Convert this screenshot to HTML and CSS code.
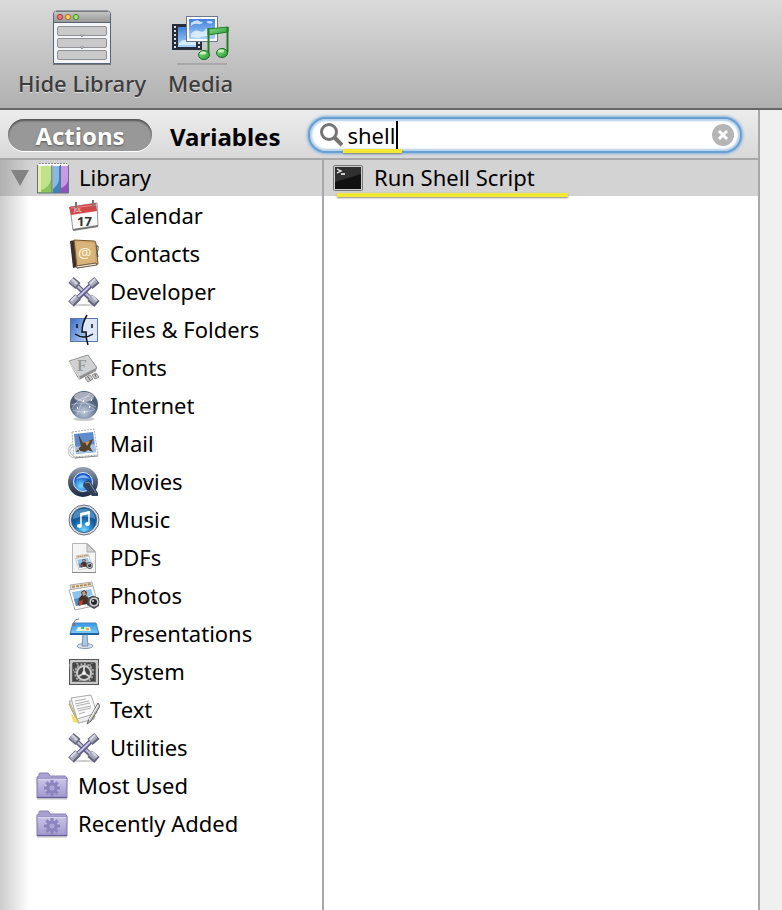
FILE: index.html
```html
<!DOCTYPE html>
<html lang="en">
<head>
  <meta charset="UTF-8">
  <meta name="viewport" content="width=device-width, initial-scale=1.0">
  <title>Library</title>
  <link rel="stylesheet" href="styles.css">
</head>
<body>
<!-- Shared icons -->
<svg class="defs" aria-hidden="true">
  <defs>
    <linearGradient id="blueSky" x1="0" y1="0" x2="0" y2="1"><stop offset="0" stop-color="#3f80dc"/><stop offset="1" stop-color="#a9d2fa"/></linearGradient>
    <linearGradient id="folderFill" x1="0" y1="0" x2="0" y2="1"><stop offset="0" stop-color="#c9c3e6"/><stop offset="1" stop-color="#a39bcf"/></linearGradient>
  </defs>
  <symbol id="wrenches" viewBox="0 0 32 32">
    <ellipse cx="16" cy="29" rx="10" ry="1" fill="#ccc"/>
    <g stroke-linecap="butt" fill="none">
      <path d="M5 6l22 21" stroke="#6a6887" stroke-width="5"/>
      <path d="M5 6l22 20" stroke="#c3c1de" stroke-width="2"/>
      <path d="M3 4l7 6M22 22l7 6" stroke="#66667c" stroke-width="8"/>
      <path d="M3 4l6 5M22 21l6 5" stroke="#a6a6ba" stroke-width="5"/>
      <path d="M4 3l5 5M24 20l5 5" stroke="#d6d6e2" stroke-width="2"/>
      <path d="M27 5L5 27" stroke="#615e84" stroke-width="5"/>
      <path d="M27 5L5 26" stroke="#c6c3e6" stroke-width="2"/>
      <path d="M29 4l-7 6M10 21l-7 7" stroke="#66667c" stroke-width="8"/>
      <path d="M28 4l-6 5M9 21l-6 6" stroke="#a9a9bd" stroke-width="5"/>
      <path d="M27 3l-5 5M8 20l-5 5" stroke="#dadae6" stroke-width="2"/>
    </g>
  </symbol>
  <symbol id="smartFolder" viewBox="0 0 32 32">
    <path d="M1 28V7l2-1V4q0-1 1-1h8q1 0 2 3h15q1 0 1 1l1 1v20z" fill="#a8a1d0" stroke="#8982b8"/>
    <path d="M1 9h30l-1 18H2z" fill="url(#folderFill)" stroke="#9189c2"/>
    <path d="M2 9.500h28" stroke="#d9d5ef"/>
    <path d="M1 27.500h30" stroke="#665e98"/>
    <path d="M1 29h30" stroke="#bbb"/>
    <g fill="none" stroke="#8b83bd">
      <circle cx="16" cy="18" r="4" stroke-width="3"/>
      <path d="M16 10v4M16 22v4M8 18h4M20 18h4M10.400 12.400l3 3M18.600 20.600l3 3M21.600 12.400l-3 3M13.400 20.600l-3 3" stroke-width="3"/>
      <circle cx="16" cy="18" r="1.500" stroke="#a8a1d3"/>
    </g>
  </symbol>
  <symbol id="snapshot" viewBox="0 0 32 32">
    <path d="M2 5l22-3 2 16-20 5z" fill="#efe4cf" stroke="#aaa"/>
    <path d="M4 7l19-3" stroke="#b08d64" stroke-width="2" stroke-dasharray="3 1"/>
    <path d="M1 10l24-4 5 19-23 5z" fill="#fff" stroke="#aaa"/>
    <path d="M4 12l19-3 4 13-19 4z" fill="#8cc4ef"/>
    <path d="M6 19l19-4 2 7-19 4z" fill="#4a91ca"/>
    <path d="M10 25l1-7 3-3-1-3 3-2 3 2-1 4 3 3v5z" fill="#4a2f26"/>
    <path d="M14 12l3-1 1 4-3 1z" fill="#d39a72"/>
    <path d="M11 21l4-1-1 5-3 1z" fill="#b5432f"/>
    <path d="M20 18l6-3 5 3v8l-5 3-7-4z" fill="#4a4d52"/>
    <path d="M20 17l5-2 5 2" stroke="#eee" fill="none"/>
    <circle cx="26" cy="22" r="5" fill="#d3d5d8" stroke="#55585b"/>
    <circle cx="26" cy="22" r="3" fill="#25282d"/>
    <circle cx="25" cy="21" r="1" fill="#ddd"/>
  </symbol>
</svg>

<header class="toolbar">
  <button class="tool" type="button">
    <svg width="60" height="56" viewBox="0 0 60 56" aria-hidden="true">
      <defs><linearGradient id="winBar" x1="0" y1="0" x2="0" y2="1"><stop offset="0" stop-color="#c8c8c8"/><stop offset="1" stop-color="#999"/></linearGradient></defs>
      <path d="M1 54.500h58" stroke="#777"/>
      <path d="M1.500 53.500V4q0-3 3-3h51q3 0 3 3v49.500z" fill="#f3f4f5" stroke="#56647a"/>
      <path d="M2 12V4q0-3 3-3h50q3 0 3 3v8z" fill="url(#winBar)"/>
      <path d="M2 12.500h56" stroke="#58616f"/>
      <path d="M4 1.500h52" stroke="#777"/>
      <g stroke-width="1">
        <circle cx="8" cy="7" r="2.700" fill="#e9767b" stroke="#9a4548"/>
        <circle cx="16" cy="7" r="2.700" fill="#ffcb53" stroke="#a1752c"/>
        <circle cx="24" cy="7" r="2.700" fill="#9ee46a" stroke="#4f8838"/>
      </g>
      <g fill="#c9c9c9" stroke="#8e9195">
        <rect x="5.500" y="16.500" width="49" height="9" rx="1.500"/>
        <rect x="5.500" y="28.500" width="49" height="9" rx="1.500"/>
        <rect x="5.500" y="40.500" width="49" height="9" rx="1.500"/>
      </g>
      <path d="M28 25l2 2 2-2zM28 37l2 2 2-2z" fill="#c9c9c9" stroke="#8e9195"/>
    </svg>
    <span>Hide Library</span>
  </button>
  <button class="tool" type="button">
    <svg width="60" height="56" viewBox="0 0 60 56" aria-hidden="true">
      <defs><linearGradient id="note" x1="0" y1="0" x2="1" y2="1"><stop offset="0" stop-color="#8fe08f"/><stop offset="1" stop-color="#219a2c"/></linearGradient></defs>
      <path d="M6 54h50" stroke="#a8a8a8" stroke-width="2"/>
      <rect x="1" y="14" width="30" height="26" fill="#272e3b"/>
      <path d="M4 16v22M28 16v22" stroke="#d5dbe2" stroke-width="2" stroke-dasharray="2 2"/>
      <rect x="7" y="17" width="18" height="20" fill="url(#blueSky)"/>
      <path d="M8 33q4-5 9-2t8-3v7H8z" fill="#d7ebff"/>
      <rect x="15.500" y="6.500" width="31" height="25" fill="#fff" stroke="#69788f"/>
      <rect x="18" y="9" width="26" height="20" fill="url(#blueSky)"/>
      <path d="M20 13q5-4 8-2t4 0q-1 4-5 3t-7 2zM20 24q3-5 8-3t6-1 7 1-4 5-8 2-9-1zM35 12q4-2 7 0-2 3-7 0z" fill="#e8f4ff" opacity=".8"/>
      <path d="M37 19l20-2v5l-20 3z" fill="url(#note)" stroke="#247b2c"/>
      <path d="M37.500 18v26M56.500 17v25" stroke="#247b2c" stroke-width="2"/>
      <ellipse cx="33" cy="45" rx="5.500" ry="4.500" fill="url(#note)" stroke="#1b6b25"/>
      <ellipse cx="51" cy="43" rx="5.500" ry="4.500" fill="url(#note)" stroke="#1b6b25"/>
      <ellipse cx="32" cy="43" rx="3" ry="1.500" fill="#c8f7bd"/>
      <ellipse cx="50" cy="41" rx="3" ry="1.500" fill="#c8f7bd"/>
    </svg>
    <span>Media</span>
  </button>
</header>

<div class="main">
  <div class="panel">
    <div class="filter-bar">
      <button class="tab active" type="button">Actions</button>
      <button class="tab" type="button">Variables</button>
      <div class="search">
        <svg width="24" height="24" viewBox="0 0 24 24" aria-hidden="true">
          <circle cx="10" cy="9" r="7.500" fill="none" stroke="#757575" stroke-width="3"/>
          <path d="M15 14l8 8" stroke="#757575" stroke-width="4"/>
        </svg>
        <input type="text" value="shell" aria-label="Search actions">
        <span class="caret"></span>
        <button class="clear" type="button" aria-label="Clear search">
          <svg width="22" height="22" viewBox="0 0 22 22" aria-hidden="true">
            <circle cx="11" cy="11" r="11" fill="#b5b5b5"/>
            <path d="M7 7l8 8M15 7l-8 8" stroke="#fff" stroke-width="3"/>
          </svg>
        </button>
        <span class="marker marker-search"></span>
      </div>
    </div>

    <div class="columns">
      <nav class="sidebar">
        <a class="row root" href="#library">
          <svg class="arrow" width="18" height="16" viewBox="0 0 18 16" aria-hidden="true"><path d="M0 0h18L9 16z" fill="#828282"/></svg>
          <svg class="icon" viewBox="0 0 32 32" aria-hidden="true">
            <path d="M2 1h28v4H2z" fill="#e5e8e5"/>
            <path d="M2 1.500h28" stroke="#888" stroke-dasharray="2 1"/>
            <path d="M0 3h15v28H1z" fill="#8cc45b"/>
            <path d="M4 4h10v13q-2 9-10 11z" fill="#bfe38d"/>
            <path d="M1 4h3v26H1z" fill="#e7eda4"/>
            <path d="M16 3h7v28h-7z" fill="#3d82b9"/>
            <path d="M16 4h6v14q-1 5-6 9z" fill="#86b9e4"/>
            <path d="M24 3h8v28h-8z" fill="#9252bd"/>
            <path d="M24 4h7v14q-1 6-7 8z" fill="#c69ae9"/>
            <path d="M1 3h30" stroke="#fff" stroke-width="2"/>
            <path d="M.5 3v28h31V3M15 3v28M23.500 3v28" fill="none" stroke="#657280"/>
          </svg>
          <span>Library</span>
        </a>
        <ul class="tree">
          <li><a class="row child" href="#calendar">
            <svg class="icon" viewBox="0 0 32 32" aria-hidden="true">
              <path d="M2 7l27-4 1 23-25 4z" fill="#fafafa" stroke="#999"/>
              <path d="M5 30l25-4" stroke="#777" stroke-width="2"/>
              <path d="M1 7l27-4 1 8-26 4z" fill="#d0484a"/>
              <path d="M3 8l25-3" stroke="#ee8585"/>
              <path d="M8 2v7M25 0v7" stroke="#777" stroke-width="2"/>
              <text class="cal-month" x="6" y="12">JUL</text>
              <text class="cal-day" x="9" y="26">17</text>
            </svg>
            <span>Calendar</span></a></li>
          <li><a class="row child" href="#contacts">
            <svg class="icon" viewBox="0 0 32 32" aria-hidden="true">
              <path d="M2 3l5-1 2 27-4 1z" fill="#3c302c"/>
              <path d="M6 2l20 1q2 0 2 3l2 20-21 4z" fill="#d0a86b" stroke="#78572f"/>
              <path d="M8 4l18 1 1 19-17 3z" fill="#d9b47a"/>
              <path d="M8 28l20-3 1 2-20 3z" fill="#f2ead9" stroke="#705d40"/>
              <path d="M28 8h2v4l-1 2 1 5" fill="none" stroke="#444"/>
              <text class="at-sign" x="10" y="20">@</text>
            </svg>
            <span>Contacts</span></a></li>
          <li><a class="row child" href="#developer">
            <svg class="icon" aria-hidden="true"><use href="#wrenches"/></svg>
            <span>Developer</span></a></li>
          <li><a class="row child" href="#files">
            <svg class="icon" viewBox="0 0 32 32" aria-hidden="true">
              <defs><linearGradient id="face" x1="0" y1="0" x2="1" y2="1"><stop offset="0" stop-color="#3e6fc9"/><stop offset="1" stop-color="#b6d2f8"/></linearGradient></defs>
              <rect x="2.500" y="4.500" width="27" height="23" fill="#dce7f8" stroke="#5977a5"/>
              <path d="M3 5h15q-4 6-4 13h4q0 5 1 9H3z" fill="url(#face)"/>
              <path d="M19 1q-5 8-5 17h4q0 7 2 13" fill="none" stroke="#111" stroke-width="1.500"/>
              <path d="M9 10v4M24 10v4M7 20q9 6 18 0" fill="none" stroke="#111" stroke-width="1.500"/>
            </svg>
            <span>Files &amp; Folders</span></a></li>
          <li><a class="row child" href="#fonts">
            <svg class="icon" viewBox="0 0 32 32" aria-hidden="true">
              <path d="M2 9l17-6 10 12-1 4-17 9-8-14z" fill="#8a8c8e"/>
              <path d="M1 9l19-6 9 13-18 9z" fill="#cfd1d3" stroke="#999"/>
              <path d="M1 10l10 15v3" fill="none" stroke="#eee"/>
              <text class="font-tile" x="9" y="19">F</text>
              <path d="M17 26l5-3 3 4-5 3zM24 23l4-2 3 4-4 2z" fill="#ccc" stroke="#888"/>
              <path d="M20 25l2 3M27 22l1 3" stroke="#666"/>
            </svg>
            <span>Fonts</span></a></li>
          <li><a class="row child" href="#internet">
            <svg class="icon" viewBox="0 0 32 32" aria-hidden="true">
              <defs><radialGradient id="globe" cx=".5" cy=".75"><stop offset="0" stop-color="#c3cddf"/><stop offset=".6" stop-color="#8391ad"/><stop offset="1" stop-color="#525f78"/></radialGradient></defs>
              <ellipse cx="16" cy="29" rx="11" ry="2" fill="#ccc"/>
              <circle cx="16" cy="15" r="14" fill="url(#globe)"/>
              <ellipse cx="16" cy="7" rx="10" ry="5" fill="#fff" opacity=".5"/>
              <path d="M4 19Q9 8 22 6M7 8q11 3 20 12M9 25Q13 11 22 3M3 15q14-5 25 2M5 20q9 4 21 0" fill="none" stroke="#fff" stroke-width=".5" opacity=".8"/>
              <path d="M9 18h1M15 11h1M21 17h1M16 22h1M23 10h1" stroke="#fff" stroke-width="2"/>
            </svg>
            <span>Internet</span></a></li>
          <li><a class="row child" href="#mail">
            <svg class="icon" viewBox="0 0 32 32" aria-hidden="true">
              <g fill="none" stroke="#aeb7c1"><circle cx="7" cy="23" r="5"/><circle cx="7" cy="23" r="7"/></g>
              <path d="M4 4l22-3 4 26-24 2z" fill="#fff" stroke="#aaa" stroke-dasharray="2 1"/>
              <path d="M7 30l23-2" stroke="#888"/>
              <path d="M6 6l19-2 3 20-20 2z" fill="#5f8bcd"/>
              <path d="M7 19l20-3 1 8-20 2z" fill="#a5c4e9"/>
              <path d="M10 6l5 9 3-1 7-3-3 8 3 5-5-2-3 2-4-1-5 1 3-4 2-2z" fill="#54412e"/>
              <path d="M17 14l5-1-3 5z" fill="#c79863"/>
              <path d="M4 18q8 1 8 8" fill="none" stroke="#c5ccd4"/>
            </svg>
            <span>Mail</span></a></li>
          <li><a class="row child" href="#movies">
            <svg class="icon" viewBox="0 0 32 32" aria-hidden="true">
              <defs><linearGradient id="qtRing" x1="0" y1="0" x2="0" y2="1"><stop offset="0" stop-color="#9aa3b3"/><stop offset=".5" stop-color="#4c5b73"/><stop offset="1" stop-color="#1c2a43"/></linearGradient><radialGradient id="qtCore" cx=".4" cy=".7"><stop offset="0" stop-color="#78dfff"/><stop offset="1" stop-color="#1558cc"/></radialGradient></defs>
              <circle cx="15" cy="16" r="15" fill="url(#qtRing)"/>
              <circle cx="15" cy="16" r="9.500" fill="url(#qtCore)" stroke="#dbe9fa"/>
              <path d="M8 13q7-8 14 0-7-2-14 0z" fill="#b7dcff" opacity=".7"/>
              <path d="M16 16l5-2 9 13v3h-6l-9-10z" fill="#33435c"/>
              <path d="M17 17l4-1 7 11" fill="none" stroke="#7e95b6"/>
            </svg>
            <span>Movies</span></a></li>
          <li><a class="row child" href="#music">
            <svg class="icon" viewBox="0 0 32 32" aria-hidden="true">
              <defs><radialGradient id="disc" cx=".5" cy=".9"><stop offset="0" stop-color="#79dcff"/><stop offset=".6" stop-color="#2685c6"/><stop offset="1" stop-color="#155b99"/></radialGradient></defs>
              <circle cx="16" cy="16" r="15" fill="#d8dde2" stroke="#65707b"/>
              <circle cx="16" cy="16" r="12.500" fill="url(#disc)" stroke="#335f88"/>
              <path d="M5 15q0-10 11-10t11 10q-10-5-22 0z" fill="#9ad3f5" opacity=".4"/>
              <path d="M13 22V10l8-2v12" fill="none" stroke="#fff" stroke-width="1.500"/>
              <path d="M12.300 9l9.500-2v3l-9.500 2z" fill="#fff"/>
              <ellipse cx="11.500" cy="22" rx="2.500" ry="2" fill="#fff"/>
              <ellipse cx="19.500" cy="20" rx="2.500" ry="2" fill="#fff"/>
            </svg>
            <span>Music</span></a></li>
          <li><a class="row child" href="#pdfs">
            <svg class="icon" viewBox="0 0 32 32" aria-hidden="true">
              <path d="M4.500 1.500h15l8 8v21h-23z" fill="#f4f4f4" stroke="#b5b5b5"/>
              <path d="M19 2v8h8z" fill="#d4d4d4" stroke="#aaa"/>
              <path d="M4 30.500h24" stroke="#888"/>
              <use href="#snapshot" x="7" y="11" width="18" height="18"/>
            </svg>
            <span>PDFs</span></a></li>
          <li><a class="row child" href="#photos">
            <svg class="icon" aria-hidden="true"><use href="#snapshot"/></svg>
            <span>Photos</span></a></li>
          <li><a class="row child" href="#presentations">
            <svg class="icon" viewBox="0 0 32 32" aria-hidden="true">
              <defs><linearGradient id="podium" x1="0" y1="0" x2="0" y2="1"><stop offset="0" stop-color="#3596e5"/><stop offset="1" stop-color="#83ccff"/></linearGradient></defs>
              <ellipse cx="17" cy="28" rx="8" ry="2.500" fill="#dbe2e9" stroke="#8b98a8"/>
              <path d="M15 16h4l1 12h-6z" fill="#adc7df" stroke="#7794b1"/>
              <path d="M5 5h23l3 11H2z" fill="url(#podium)" stroke="#4487bd"/>
              <path d="M2 16h29" stroke="#2061a0" stroke-width="2"/>
              <path d="M10 9h12l1 4H8z" fill="#e8f0d7"/>
              <path d="M13 9h3v2h-3z" fill="#4ebd67"/><path d="M18 10h3v2h-3z" fill="#efa63e"/>
              <path d="M6 8V4q1-3 5-3" fill="none" stroke="#777"/>
              <path d="M6 5v3" stroke="#c44"/>
            </svg>
            <span>Presentations</span></a></li>
          <li><a class="row child" href="#system">
            <svg class="icon" viewBox="0 0 32 32" aria-hidden="true">
              <rect x="1.500" y="3.500" width="29" height="25" fill="#c6c6c6" stroke="#555"/>
              <rect x="4" y="6" width="24" height="20" fill="#444" stroke="#777"/>
              <g fill="none" stroke="#ccc">
                <circle cx="16" cy="17" r="7" stroke-width="2"/>
                <circle cx="16" cy="17" r="9" stroke="#aaa" stroke-width="2" stroke-dasharray="2 1.500"/>
                <path d="M16 17V10M16 17l-6 4M16 17l6 4" stroke-width="2"/>
                <circle cx="6" cy="10" r="4" stroke="#999" stroke-width="2" stroke-dasharray="2 1"/>
                <circle cx="26" cy="10" r="4" stroke="#999" stroke-width="2" stroke-dasharray="2 1"/>
              </g>
              <circle cx="16" cy="17" r="2" fill="#eee"/>
              <path d="M2 4h28v3H2zM2 26h28v2H2zM2 4h3v24H2zM27 4h3v24h-3z" fill="#c9c9c9"/>
              <path d="M5 6.500h22M4.500 7v19M27.500 7v19M5 25.500h22" stroke="#666"/>
            </svg>
            <span>System</span></a></li>
          <li><a class="row child" href="#text">
            <svg class="icon" viewBox="0 0 32 32" aria-hidden="true">
              <path d="M1 10l18-5 8 18-17 6z" fill="#f7df69" stroke="#bba35b"/>
              <path d="M1 7l23-2 2 20-15 4z" fill="#eee" stroke="#aaa"/>
              <path d="M3 4l20-3 6 18-20 6z" fill="#fbfbfb" stroke="#aaa"/>
              <path d="M3 20l2 8 5 1-2-5z" fill="#f7df69"/>
              <path d="M7 7l11-2M7 10l14-3M8 12l14-3M9 15l14-3M10 17l13-3M11 20l6-2" stroke="#999" stroke-width=".8"/>
              <path d="M30 9L21 25l-2 5 4-3 9-15z" fill="#bfc2c5" stroke="#666"/>
              <path d="M30 11l-9 15" stroke="#fff"/>
            </svg>
            <span>Text</span></a></li>
          <li><a class="row child" href="#utilities">
            <svg class="icon" aria-hidden="true"><use href="#wrenches"/></svg>
            <span>Utilities</span></a></li>
          <li><a class="row" href="#most-used">
            <svg class="icon" aria-hidden="true"><use href="#smartFolder"/></svg>
            <span>Most Used</span></a></li>
          <li><a class="row" href="#recently-added">
            <svg class="icon" aria-hidden="true"><use href="#smartFolder"/></svg>
            <span>Recently Added</span></a></li>
        </ul>
      </nav>

      <section class="results">
        <a class="row result" href="#run-shell-script">
          <svg class="icon" viewBox="0 0 32 32" aria-hidden="true">
            <rect x="1.500" y="3.500" width="29" height="25" rx="1" fill="#ccc" stroke="#777"/>
            <rect x="3" y="5" width="26" height="22" fill="#111"/>
            <path d="M3 5h26v7L3 20z" fill="#303030"/>
            <path d="M5 7l4 2-4 2M9 12h4" fill="none" stroke="#fff" stroke-width="1.300"/>
          </svg>
          <span>Run Shell Script</span>
          <i class="marker marker-result"></i>
        </a>
      </section>
    </div>
  </div>
</div>
</body>
</html>
```
FILE: styles.css
```css
* {
  box-sizing: border-box;
}

body {
  display: flex;
  flex-direction: column;
  min-height: 100vh;
  margin: 0;
  font-family: 'Noto Sans', 'Lucida Grande', sans-serif;
  font-size: 22px;
  line-height: 30px;
  color: #000;
  background-color: #f0f0f0;
}

button {
  padding: 0;
  border: none;
  background: none;
  font: inherit;
  cursor: pointer;
}

svg {
  display: block;
  flex: none;
}

.defs {
  position: absolute;
  width: 0;
  height: 0;
}

/* Toolbar */
.toolbar {
  display: flex;
  align-items: flex-start;
  gap: 22px;
  height: 110px;
  padding: 10px 18px 0;
  border-bottom: 2px solid #666;
  background: linear-gradient(#dadada, #b0b0b0);
}

.tool {
  display: flex;
  flex-direction: column;
  align-items: center;
  gap: 2px;
  color: #3c3c3c;
  font-weight: 500;
  text-shadow: 0 1px 0 #ddd;
}

/* Main panel */
.main {
  display: flex;
  flex: 1;
  padding-right: 22px;
}

.panel {
  display: flex;
  flex: 1;
  flex-direction: column;
  border-right: 2px solid #a8a8a8;
  background-color: #fff;
}

.filter-bar {
  display: flex;
  align-items: center;
  height: 50px;
  padding: 2px 16px 0 8px;
  border-bottom: 2px solid #a8a8a8;
  background: linear-gradient(#ececec, #d9d9d9);
}

.tab {
  padding: 4px 18px 0;
  font-size: 24px;
  font-weight: bold;
}

.tab.active {
  width: 144px;
  height: 32px;
  padding: 2px 0 0;
  border-radius: 16px;
  color: #fff;
  background-color: #989898;
  box-shadow: inset 0 2px 2px #555, 0 1px 0 #fff;
  text-shadow: 0 1px 2px #555;
}

.search {
  position: relative;
  display: flex;
  flex: 1;
  align-items: center;
  gap: 4px;
  height: 36px;
  margin-left: 10px;
  padding: 0 6px 0 9px;
  border: 2px solid #6a9fd1;
  border-radius: 18px;
  background-color: #fff;
  box-shadow: 0 0 3px 1px #7fafdc, inset 0 0 2px 2px #b2cfeb;
}

.search input {
  flex: 1;
  min-width: 0;
  padding: 0;
  border: none;
  outline: none;
  background: none;
  font: inherit;
}

.caret {
  position: absolute;
  top: 2px;
  left: 86px;
  width: 2px;
  height: 28px;
  background-color: #000;
}

/* Yellow underlines */
.marker {
  position: absolute;
  height: 4px;
  background-color: #f4e932;
  box-shadow: 0 1px 2px #888;
}

.marker-search {
  bottom: -2px;
  left: 33px;
  width: 59px;
}

.marker-result {
  bottom: -1px;
  left: 13px;
  width: 231px;
}

.columns {
  display: flex;
  flex: 1;
}

.sidebar {
  flex: 0 0 324px;
  border-right: 2px solid #a8a8a8;
  background: linear-gradient(to right, rgba(0, 0, 0, 0.2), rgba(0, 0, 0, 0) 30px);
}

.tree {
  margin: 1px 0 0;
  padding: 0;
  list-style: none;
}

.row {
  display: flex;
  align-items: center;
  gap: 10px;
  height: 38px;
  padding-left: 36px;
  color: #000;
  text-decoration: none;
}

.row span {
  padding-bottom: 2px;
}

.row.child {
  padding-left: 68px;
}

.row.root {
  gap: 8px;
  height: 36px;
  padding-left: 11px;
  background: linear-gradient(to right, #b0b0b0, #d3d3d3 30px);
}

.row.root .icon {
  margin-right: 2px;
}

.icon {
  width: 32px;
  height: 32px;
}

.results {
  flex: 1;
}

.row.result {
  position: relative;
  height: 36px;
  padding-left: 8px;
  background-color: #d3d3d3;
}

/* Lettering inside icons */
.cal-month {
  font-size: 5px;
  fill: #fff;
}

.cal-day {
  font-size: 13px;
  font-weight: bold;
  fill: #333;
}

.at-sign {
  font-size: 15px;
  fill: #fff3d6;
}

.font-tile {
  font-family: 'Liberation Serif', serif;
  font-size: 16px;
  font-weight: bold;
  fill: #999;
}
```
